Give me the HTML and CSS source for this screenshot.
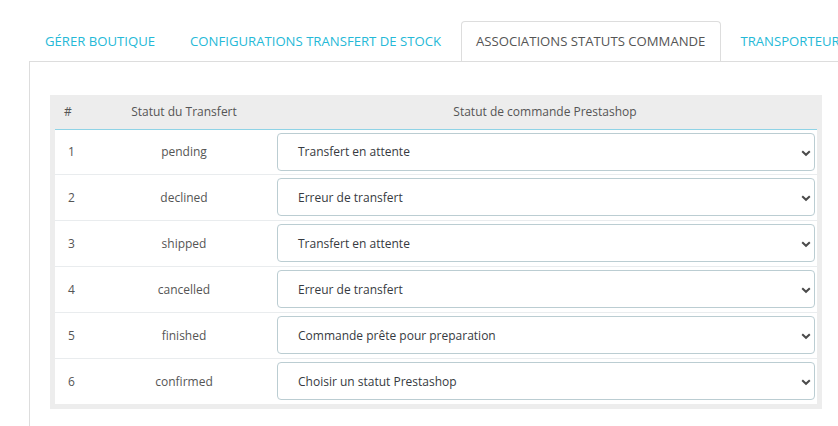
FILE: index.html
```html
<!DOCTYPE html>
<html lang="fr">
<head>
<meta charset="utf-8">
<title>Associations statuts commande</title>
<link rel="stylesheet" href="styles.css">
</head>
<body>
<div class="page">
  <ul class="tabs">
    <li class="tab"><a>GÉRER BOUTIQUE</a></li>
    <li class="tab"><a>CONFIGURATIONS TRANSFERT DE STOCK</a></li>
    <li class="tab active"><a>ASSOCIATIONS STATUTS COMMANDE</a></li>
    <li class="tab"><a>TRANSPORTEURS</a></li>
  </ul>
  <div class="panel">
    <div class="well">
      <table class="grid">
        <thead>
          <tr><th class="c-num">#</th><th class="c-st">Statut du Transfert</th><th class="c-sel">Statut de commande Prestashop</th></tr>
        </thead>
        <tbody>
          <tr><td class="c-num">1</td><td class="c-st">pending</td><td class="c-sel"><div class="sel"><span>Transfert en attente</span><svg class="chev" width="10" height="8" viewBox="0 0 10 8"><path d="M1.2 2.2 L5 5.8 L8.8 2.2" fill="none" stroke="#4a4a4a" stroke-width="2"/></svg></div></td></tr>
          <tr><td class="c-num">2</td><td class="c-st">declined</td><td class="c-sel"><div class="sel"><span>Erreur de transfert</span><svg class="chev" width="10" height="8" viewBox="0 0 10 8"><path d="M1.2 2.2 L5 5.8 L8.8 2.2" fill="none" stroke="#4a4a4a" stroke-width="2"/></svg></div></td></tr>
          <tr><td class="c-num">3</td><td class="c-st">shipped</td><td class="c-sel"><div class="sel"><span>Transfert en attente</span><svg class="chev" width="10" height="8" viewBox="0 0 10 8"><path d="M1.2 2.2 L5 5.8 L8.8 2.2" fill="none" stroke="#4a4a4a" stroke-width="2"/></svg></div></td></tr>
          <tr><td class="c-num">4</td><td class="c-st">cancelled</td><td class="c-sel"><div class="sel"><span>Erreur de transfert</span><svg class="chev" width="10" height="8" viewBox="0 0 10 8"><path d="M1.2 2.2 L5 5.8 L8.8 2.2" fill="none" stroke="#4a4a4a" stroke-width="2"/></svg></div></td></tr>
          <tr><td class="c-num">5</td><td class="c-st">finished</td><td class="c-sel"><div class="sel"><span>Commande prête pour preparation</span><svg class="chev" width="10" height="8" viewBox="0 0 10 8"><path d="M1.2 2.2 L5 5.8 L8.8 2.2" fill="none" stroke="#4a4a4a" stroke-width="2"/></svg></div></td></tr>
          <tr><td class="c-num">6</td><td class="c-st">confirmed</td><td class="c-sel"><div class="sel"><span>Choisir un statut Prestashop</span><svg class="chev" width="10" height="8" viewBox="0 0 10 8"><path d="M1.2 2.2 L5 5.8 L8.8 2.2" fill="none" stroke="#4a4a4a" stroke-width="2"/></svg></div></td></tr>
        </tbody>
      </table>
    </div>
  </div>
</div>
</body>
</html>
```
FILE: styles.css
```css
* { box-sizing: border-box; }
html, body { margin: 0; padding: 0; background: #fff; }
body {
  font-family: "Open Sans", "Noto Sans", sans-serif;
  font-size: 12px;
  color: #555;
  overflow: hidden;
  width: 838px;
  height: 426px;
}
.page {
  padding: 21px 0 0 29px;
  width: 838px;
  height: 426px;
  overflow: hidden;
}
.tabs {
  list-style: none;
  margin: 0;
  padding: 0 0 0 1px;
  display: flex;
  height: 41px;
  border-bottom: 1px solid #dddddd;
  overflow: hidden;
}
.tab {
  flex: none;
  margin-right: 4px;
  height: 41px;
  border: 1px solid transparent;
  border-radius: 4px 4px 0 0;
  display: flex;
  align-items: center;
  padding: 0 15px 2px 14px;
  white-space: nowrap;
}
.tab a {
  font-size: 13.15px;
  color: #25b9d7;
}
.tab.active {
  border-color: #dddddd;
  border-bottom-color: #fff;
  background: #fff;
}
.tab.active a { color: #555; }
.panel {
  border-left: 1px solid #dddddd;
  padding: 33px 20px 0 20px;
  height: 364px;
}
.well {
  background: #ededed;
  padding: 0 5px 5px 5px;
  width: 772px;
}
.grid {
  width: 100%;
  border-collapse: collapse;
  table-layout: fixed;
}
.grid th {
  font-weight: normal;
  height: 34px;
  padding: 0;
  border-bottom: 1px solid #8fd3e6;
  color: #555;
}
.grid td {
  background: #fff;
  height: 46px;
  padding: 0;
  border-top: 1px solid #e9ecee;
}
.grid tbody tr:first-child td { border-top: none; height: 45px; }
.c-num { width: 40px; text-align: left; }
th.c-num { padding-left: 9px !important; }
td.c-num { padding-left: 13px !important; }
.c-st { width: 178px; text-align: center; }
.c-sel { text-align: center; }
td.c-sel { padding: 0 2px 0 4px !important; }
.sel {
  position: relative;
  height: 38px;
  border: 1px solid #bbcdd2;
  border-radius: 4px;
  background: #fff;
  display: flex;
  align-items: center;
  padding-left: 20px;
  text-align: left;
  color: #363a41;
}
.chev {
  position: absolute;
  right: 3px;
  top: 15px;
}
```
